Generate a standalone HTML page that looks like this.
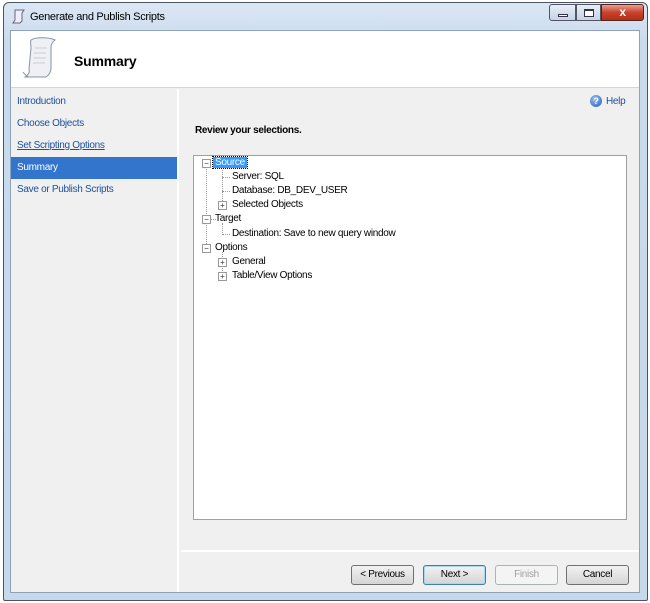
<!DOCTYPE html>
<html><head><style>
*{margin:0;padding:0;box-sizing:border-box}
body{width:650px;height:603px;background:#fff;font-family:"Liberation Sans",sans-serif;font-size:10px;letter-spacing:-0.3px;position:relative;overflow:hidden}
.frame{position:absolute;left:3px;top:2px;width:645px;height:599px;border:1px solid #4a5560;border-radius:6px 6px 2px 2px;background:linear-gradient(#dce7f3,#c9daee 40px,#c6d8ec);}
.title{position:absolute;left:30px;top:11px;font-size:11px;color:#000}
.client{position:absolute;left:10px;top:30px;width:630px;height:563px;background:#f0f0f0;border:1px solid #8ea2b8}
.hdr{position:absolute;left:0;top:0;width:628px;height:57px;background:#fff;border-bottom:1px solid #d5d5d5}
.nav{position:absolute;left:0;top:58px;width:168px;height:503px;border-right:2px solid #fff}
.nav div{height:22px;line-height:22px;padding-left:6px;color:#1c4f9c}
.nav .sel{background:#3374cc;color:#fff}
.tree{position:absolute;left:182px;top:124px;width:434px;height:365px;background:#fff;border:1px solid #a0a0a0}
.t{position:absolute;white-space:nowrap;color:#000}
.btn{position:absolute;top:534px;height:20px;width:63px;border:1px solid #707070;border-radius:3px;background:linear-gradient(#f2f2f2,#e3e3e3 50%,#d5d5d5);text-align:center;line-height:18px}
.box{position:absolute;width:9px;height:9px;border:1px solid #999;background:#fff;font-size:8px;line-height:7px;text-align:center;color:#333;letter-spacing:0}
.dl{position:absolute;border-left:1px dotted #999}
.dh{position:absolute;border-top:1px dotted #999}
</style></head><body>
<div class="frame"></div>
<svg style="position:absolute;left:11px;top:8px" width="16" height="16"><path d="M4 2h9l-2 3v8l-2 2H2l2-3z" fill="#eef" stroke="#667"/></svg>
<div class="title">Generate and Publish Scripts</div>
<div style="position:absolute;left:549px;top:4px;width:27px;height:17px;border:1px solid #556;border-radius:3px 0 0 3px;background:linear-gradient(#e8eef6,#c4d3e6)"><div style="position:absolute;left:8px;top:9px;width:10px;height:3px;border:1px solid #334;background:#fff"></div></div>
<div style="position:absolute;left:576px;top:4px;width:25px;height:17px;border:1px solid #556;background:linear-gradient(#e8eef6,#c4d3e6)"><div style="position:absolute;left:7px;top:4px;width:10px;height:8px;border:1px solid #334;border-top-width:2px;background:#fff"></div></div>
<div style="position:absolute;left:601px;top:4px;width:43px;height:17px;border:1px solid #522;border-radius:0 3px 3px 0;background:linear-gradient(#e8a090,#c8412c 50%,#b03018);color:#fff;font-weight:bold;text-align:center;line-height:15px;font-size:12px">x</div>
<div class="client">
 <div class="hdr">
  <svg style="position:absolute;left:8px;top:5px" width="40" height="46"><path d="M12 4c4-3 18-3 24 0-3 2-4 5-4 8v20c0 4-2 7-5 9H6c3-2 5-4 4-8L12 12c0-4-1-6 0-8z" fill="#eef0f4" stroke="#8894a8"/><path d="M4 36c2 3 5 5 6 5" fill="none" stroke="#8894a8"/><path d="M16 12h12M15 17h12M15 22h12M14 27h12" stroke="#c8ccd6"/></svg>
  <div style="position:absolute;left:63px;top:22px;font-size:14px;font-weight:bold;letter-spacing:-0.2px">Summary</div>
 </div>
 <div class="nav" style="padding-top:2px">
  <div>Introduction</div><div>Choose Objects</div><div style="text-decoration:underline">Set Scripting Options</div><div class="sel">Summary</div><div>Save or Publish Scripts</div>
 </div>
 <div style="position:absolute;left:579px;top:64px;width:12px;height:12px;border-radius:50%;background:radial-gradient(circle at 40% 35%,#9cc0f0,#2458b8);color:#fff;font-size:9px;font-weight:bold;text-align:center;line-height:12px">?</div>
 <div class="t" style="left:595px;top:65px;color:#1c4f9c">Help</div>
 <div class="t" style="left:184px;top:94px;font-weight:bold">Review your selections.</div>
 <div class="tree">
  <div class="dl" style="left:12px;top:10px;height:84px"></div>
  <div class="dl" style="left:28px;top:14px;height:35px"></div>
  <div class="dl" style="left:28px;top:67px;height:12px"></div>
  <div class="dl" style="left:28px;top:96px;height:25px"></div>
  <div class="dh" style="left:28px;top:21px;width:8px"></div>
  <div class="dh" style="left:28px;top:35px;width:8px"></div>
  <div class="dh" style="left:28px;top:78px;width:8px"></div>
  <div class="dh" style="left:16px;top:63px;width:6px"></div>
  <div class="box" style="left:8px;top:3px">−</div><div class="t" style="left:19px;top:1px;background:#3399ff;color:#fff;padding:0 2px;outline:1px dotted #000">Source</div>
  <div class="t" style="left:38px;top:15px">Server: SQL</div>
  <div class="t" style="left:38px;top:29px">Database: DB_DEV_USER</div>
  <div class="box" style="left:24px;top:45px">+</div><div class="t" style="left:38px;top:43px">Selected Objects</div>
  <div class="box" style="left:8px;top:59px">−</div><div class="t" style="left:21px;top:57px">Target</div>
  <div class="t" style="left:38px;top:72px">Destination: Save to new query window</div>
  <div class="box" style="left:8px;top:88px">−</div><div class="t" style="left:21px;top:86px">Options</div>
  <div class="box" style="left:24px;top:102px">+</div><div class="t" style="left:38px;top:100px">General</div>
  <div class="box" style="left:24px;top:116px">+</div><div class="t" style="left:38px;top:114px">Table/View Options</div>
 </div>
 <div style="position:absolute;left:170px;top:519px;width:458px;border-top:2px solid #fff"></div>
 <div class="btn" style="left:340px">&lt; Previous</div>
 <div class="btn" style="left:412px;border-color:#3c7fb1;box-shadow:inset 0 0 0 1px #a8d8f0">Next &gt;</div>
 <div class="btn" style="left:484px;color:#a0a0a0;border-color:#adb2b5;background:#f4f4f4">Finish</div>
 <div class="btn" style="left:555px">Cancel</div>
</div>
</body></html>
